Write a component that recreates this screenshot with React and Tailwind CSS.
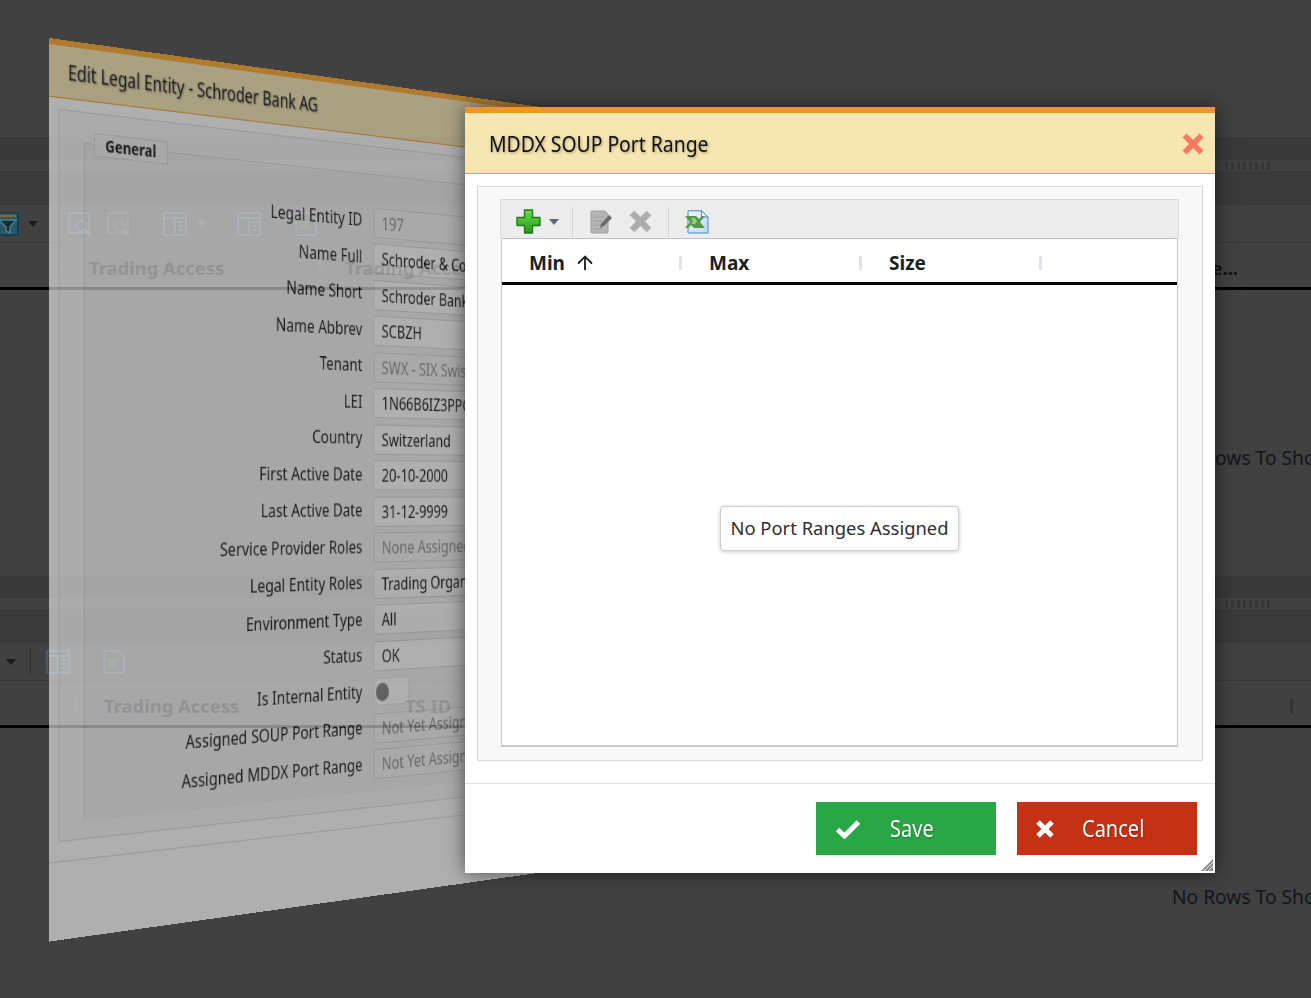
import React from 'react';
import { ArrowUp } from 'lucide-react';

const formRows = [
  { label: 'Legal Entity ID', value: '197', disabled: true },
  { label: 'Name Full', value: 'Schroder & Co Bank AG' },
  { label: 'Name Short', value: 'Schroder Bank AG' },
  { label: 'Name Abbrev', value: 'SCBZH' },
  { label: 'Tenant', value: 'SWX - SIX Swiss Exchange', disabled: true },
  { label: 'LEI', value: '1N66B6IZ3PPC0000000' },
  { label: 'Country', value: 'Switzerland' },
  { label: 'First Active Date', value: '20-10-2000' },
  { label: 'Last Active Date', value: '31-12-9999' },
  { label: 'Service Provider Roles', value: 'None Assigned', disabled: true },
  { label: 'Legal Entity Roles', value: 'Trading Organisation' },
  { label: 'Environment Type', value: 'All' },
  { label: 'Status', value: 'OK' },
  { label: 'Is Internal Entity', toggle: true },
  { label: 'Assigned SOUP Port Range', value: 'Not Yet Assigned', disabled: true },
  { label: 'Assigned MDDX Port Range', value: 'Not Yet Assigned', disabled: true },
];

function Caret({ className }) {
  return (
    <svg width="10" height="6" viewBox="0 0 10 6" className={className}>
      <path d="M0 0h10L5 6z" fill="currentColor" />
    </svg>
  );
}

function PlusIcon() {
  return (
    <svg width="25" height="25" viewBox="0 0 25 25">
      <defs>
        <linearGradient id="plusFill" x1="0" y1="0" x2="0" y2="1">
          <stop offset="0" stopColor="#6fdc4a" />
          <stop offset="1" stopColor="#1f9a17" />
        </linearGradient>
      </defs>
      <path d="M8.5 1h8v7.5H24v8h-7.5V24h-8v-7.5H1v-8h7.5z" fill="url(#plusFill)" stroke="#1f7a1a" strokeWidth="1.4" strokeLinejoin="round" />
    </svg>
  );
}

function NoteIcon() {
  return (
    <svg width="23" height="24" viewBox="0 0 23 24">
      <path d="M2 1h13l3 3v18a1 1 0 0 1-1 1H2a1 1 0 0 1-1-1V2a1 1 0 0 1 1-1z" fill="#b4b4b4" stroke="#a0a0a0" />
      <path d="M4 7h10M4 11h9M4 15h7M4 19h8" stroke="#9e9e9e" strokeWidth="1.2" />
      <path d="M10 18l1-4 8-9 3 3-8 8z" fill="#6a6a6a" />
    </svg>
  );
}

function GrayCross() {
  return (
    <svg width="23" height="23" viewBox="0 0 23 23">
      <path d="M3 3l17 17M20 3L3 20" stroke="#adadad" strokeWidth="6.5" />
    </svg>
  );
}

function ExcelIcon() {
  return (
    <svg width="24" height="24" viewBox="0 0 24 24">
      <defs>
        <linearGradient id="docFill" x1="0" y1="0" x2="1" y2="1">
          <stop offset="0" stopColor="#eef6fd" />
          <stop offset="1" stopColor="#bcd8f5" />
        </linearGradient>
      </defs>
      <path d="M3 .8h13.5L23 7v16H3z" fill="url(#docFill)" stroke="#4a86c8" />
      <path d="M16.5 .8V7H23z" fill="#f4f9fe" stroke="#4a86c8" />
      <path d="M0 6h11l3 3 3-3h3l-5 6 5 6h-11l-3-3-3 3H0l5-6z" fill="#4f9a46" />
      <path d="M6 8h4l2 3-2 3H6l2-3z" fill="#9ccc7c" />
    </svg>
  );
}

function PageDoc({ tone = '#57708a' }) {
  return (
    <svg width="24" height="24" viewBox="0 0 24 24" fill="none" stroke={tone}>
      <rect x="1" y="1" width="22" height="22" />
      <path d="M1 6h22M12 6v17M15 10h5M15 14h5M15 18h5" />
    </svg>
  );
}

function PageSearch({ tone = '#57708a' }) {
  return (
    <svg width="24" height="24" viewBox="0 0 24 24" fill="none" stroke={tone}>
      <rect x="1" y="1" width="20" height="20" />
      <circle cx="13" cy="14" r="5" />
      <path d="M17 18l5 5" strokeWidth="2" />
    </svg>
  );
}

function PageExcel() {
  return (
    <svg width="22" height="24" viewBox="0 0 22 24" fill="none" stroke="#57708a">
      <path d="M1 1h14l6 6v16H1z" />
      <path d="M1 9h14l-4 4 4 4H1l5-4z" fill="#3f5a3f" stroke="none" />
    </svg>
  );
}

function FilterIcon() {
  return (
    <svg width="19" height="24" viewBox="0 0 19 24" fill="none">
      <rect x="-4" y="1" width="22" height="22" fill="#2c5866" stroke="#173f52" strokeWidth="2" />
      <path d="M-2 4h18" stroke="#8a6428" strokeWidth="2.4" />
      <path d="M-1 8h17l-6 7v6l-4-2v-4z" fill="#1d2c33" stroke="#3f8296" strokeWidth="1.6" />
    </svg>
  );
}

function Sep({ className }) {
  return <span className={`w-[3px] h-[14px] shrink-0 ${className}`} />;
}

function GridPanel({ titleBand, toolbar, header, bodyClass }) {
  return (
    <div className="flex flex-col">
      <div className={`border-y border-[#383838] bg-[#393939] ${titleBand}`} />
      <div className="h-[11px] flex justify-end pr-[41px]">
        <span className="w-[45px] h-[8px] mt-[2px] bg-[repeating-linear-gradient(90deg,#363636_0_3px,#414141_3px_6px)]" />
      </div>
      <div className="h-[34px] bg-[#3a3a3a]" />
      <div className="h-[38px] flex items-center border-b border-[#373737]">{toolbar}</div>
      <div className="h-[44px] pt-[6px] flex items-center text-[18.4px] font-bold text-[#111]">{header}</div>
      <div className="h-[3px] bg-black" />
      <div className={`flex pl-[1172px] text-[19.2px] leading-[27px] text-[#12161c] whitespace-nowrap ${bodyClass}`}>No Rows To Show</div>
    </div>
  );
}

function EntityRow({ label, value, disabled, toggle }) {
  return (
    <div className="flex items-center h-[28px]">
      <div className="w-[328px] pb-[3px] text-right text-[17px] text-black whitespace-nowrap">{label}</div>
      {toggle ? (
        <div className="ml-[14px] w-[46px] h-[26px] rounded-[4px] bg-white border border-[#e2e2e2] flex items-center pl-[2px]">
          <span className="w-[17px] h-[17px] rounded-full bg-[#777]" />
        </div>
      ) : (
        <div className={`ml-[14px] w-[290px] h-[28px] border border-[#d8d8d8] pl-[10px] flex items-center text-[17px] whitespace-nowrap overflow-hidden ${disabled ? 'bg-[#f4f4f4] text-[#888]' : 'bg-white text-black'}`}>
          {value}
        </div>
      )}
    </div>
  );
}

function EntityWindow() {
  return (
    <div className="absolute left-0 top-0 w-[700px] h-[752.5px] origin-top-left [transform:matrix3d(0.96446,0.1444,0,0.000295,0,1.2,0,0,0,0,1,0,49,38,0,1)] opacity-[.58] bg-white flex flex-col">
      <div className="h-[49px] shrink-0 bg-[#f6e6b2] border-t-[5px] border-t-[#ffa41f] border-b border-b-[#f0a030] pl-[20px] flex items-center">
        <span className="text-[17.2px] text-black [text-shadow:1px_1px_2px_rgba(0,0,0,.4)]">Edit Legal Entity - Schroder Bank AG</span>
      </div>
      <div className="ml-[9.5px] mt-[9px] h-[613px] w-[680px] shrink-0 border border-[#dcdcdc] bg-[#f8f8f8] flex flex-col">
        <div className="mt-[25px] ml-[26px] flex-1 mb-[14px] border-t border-l border-[#dcdcdc] bg-[#f2f2f2] relative pt-[29.5px] flex flex-col gap-[5.5px]">
          <div className="absolute left-[10px] -top-[10px] w-[82px] h-[20px] bg-[#f8f8f8] border border-[#dcdcdc] text-[14.5px] font-bold text-black flex items-center justify-center">General</div>
          {formRows.map((row) => (
            <EntityRow key={row.label} {...row} />
          ))}
        </div>
      </div>
      <div className="mt-[16px] border-t border-[#dcdcdc]" />
    </div>
  );
}

function PortRangeDialog() {
  return (
    <div className="absolute left-[465px] top-[107px] w-[750px] h-[766px] bg-white flex flex-col shadow-[0_0_18px_rgba(0,0,0,.55)]">
      <div className="h-[67px] shrink-0 bg-[#f6e6b2] border-t-[6px] border-t-[#f0981e] border-b border-b-[#e0a030] flex items-center justify-between pl-[24px] pr-[10px]">
        <span className="inline-block mt-[1px] origin-left scale-x-[.86] text-[22.5px] text-[#111] whitespace-nowrap [text-shadow:1px_1px_3px_rgba(0,0,0,.35)]">MDDX SOUP Port Range</span>
        <svg width="24" height="24" viewBox="0 0 24 24" className="mt-[2px]">
          <path d="M3.5 3.5l17 17M20.5 3.5l-17 17" stroke="#ff7560" strokeWidth="5.5" />
        </svg>
      </div>

      <div className="mt-[12px] mx-[12px] h-[575px] shrink-0 border border-[#dadada] bg-[#f8f8f8] pt-[12px] pl-[22px] pr-[23px]">
        <div className="h-[39px] pt-[5px] bg-[#ececec] border border-b-0 border-[#dcdcdc] flex items-center">
          <span className="ml-[15px] flex"><PlusIcon /></span>
          <Caret className="ml-[8px] text-[#5c6b7a]" />
          <span className="ml-[13px] w-px h-[30px] bg-[#d2d2d2]" />
          <span className="ml-[17px] flex"><NoteIcon /></span>
          <span className="ml-[16px] flex"><GrayCross /></span>
          <span className="ml-[16px] w-px h-[30px] bg-[#d2d2d2]" />
          <span className="ml-[16px] flex"><ExcelIcon /></span>
        </div>
        <div className="h-[509px] ml-[1px] mr-[1px] bg-white border-t border-t-[#bdbdcc] border-x border-x-[#c4c4cc] border-b-2 border-b-[#c8ccd8] flex flex-col relative">
          <div className="h-[43px] pt-[5px] flex items-center text-[19px] font-bold text-[#1a1f24]">
            <div className="w-[180px] flex items-center pl-[27px]">
              <span>Min</span>
              <ArrowUp size={22} strokeWidth={2} className="ml-[9px] text-[#1a1f24]" />
              <Sep className="ml-auto bg-[#dfe3ec]" />
            </div>
            <div className="w-[180px] flex items-center pl-[27px]">
              <span>Max</span>
              <Sep className="ml-auto bg-[#dfe3ec]" />
            </div>
            <div className="w-[180px] flex items-center pl-[27px]">
              <span>Size</span>
              <Sep className="ml-auto bg-[#dfe3ec]" />
            </div>
          </div>
          <div className="h-[3px] bg-black" />
          <div className="flex-1 flex items-center justify-center pt-[26px]">
            <div className="h-[45px] px-[9px] flex items-center bg-white border border-[#ccc] rounded-[4px] shadow-[0_1px_4px_rgba(0,0,0,.2)] text-[18.4px] text-[#2a2f35] whitespace-nowrap">No Port Ranges Assigned</div>
          </div>
        </div>
      </div>

      <div className="mt-[22px] border-t border-[#e2e2e2] flex justify-end gap-[21px] pt-[18px] pr-[18px]">
        <button className="w-[180px] h-[53px] bg-[#29a746] text-white flex items-center pl-[19px]">
          <svg width="26" height="20" viewBox="0 0 26 20" fill="none">
            <path d="M2.5 10.5l7 6.5L23.5 3" stroke="#fff" strokeWidth="5" />
          </svg>
          <span className="ml-[29px] inline-block origin-left scale-x-[.87] text-[23px] [text-shadow:1px_1px_2px_rgba(0,0,0,.3)]">Save</span>
        </button>
        <button className="w-[180px] h-[53px] bg-[#c53115] text-white flex items-center pl-[19px]">
          <svg width="18" height="18" viewBox="0 0 18 18" fill="none">
            <path d="M2 2l14 14M16 2L2 16" stroke="#fff" strokeWidth="5" />
          </svg>
          <span className="ml-[28px] inline-block origin-left scale-x-[.87] text-[23px] [text-shadow:1px_1px_2px_rgba(0,0,0,.3)]">Cancel</span>
        </button>
      </div>

      <svg width="12" height="12" viewBox="0 0 12 12" className="absolute right-[2px] bottom-[2px]">
        <path d="M0 12L12 0v12z" fill="#8a8a8a" />
        <path d="M3 12l9-9M7 12l5-5" stroke="#fff" strokeWidth=".8" />
      </svg>
    </div>
  );
}

export default function App() {
  return (
    <div className="relative w-[1311px] h-[998px] overflow-hidden bg-[#414141] font-['Noto_Sans',sans-serif] pt-[137px]">
      <GridPanel
        titleBand="h-[23px]"
        bodyClass="h-[286px] pt-[154px]"
        toolbar={
          <>
            <FilterIcon />
            <Caret className="ml-[9px] text-[#1c1c1c]" />
            <span className="ml-[30px]"><PageSearch /></span>
            <span className="ml-[15px]"><PageSearch tone="#5e5e5e" /></span>
            <span className="ml-[32px]"><PageDoc /></span>
            <Caret className="ml-[10px] text-[#555]" />
            <span className="ml-[30px]"><PageDoc /></span>
            <span className="ml-[34px]"><PageExcel /></span>
          </>
        }
        header={
          <>
            <Sep className="ml-[60px] bg-[#4a4a4a]" />
            <span className="w-[255px] pl-[26px]">Trading Access</span>
            <Sep className="bg-[#4a4a4a]" />
            <span className="w-[789px] pl-[24px]">Trading Access</span>
            <span className="w-[128px] text-right whitespace-nowrap">Service Role...</span>
          </>
        }
      />
      <GridPanel
        titleBand="h-[22px]"
        bodyClass="pt-[155px]"
        toolbar={
          <>
            <Caret className="ml-[6px] text-[#1c1c1c]" />
            <span className="ml-[14px] w-px h-[28px] bg-[#333]" />
            <span className="ml-[15px]"><PageDoc /></span>
            <span className="ml-[33px]"><PageExcel /></span>
          </>
        }
        header={
          <>
            <Sep className="ml-[75px] bg-[#4a4a4a]" />
            <span className="w-[300px] pl-[26px]">Trading Access</span>
            <Sep className="bg-[#4a4a4a]" />
            <span className="w-[909px] pl-[24px]">TS ID</span>
            <Sep className="bg-[#333]" />
          </>
        }
      />
      <EntityWindow />
      <PortRangeDialog />
    </div>
  );
}
